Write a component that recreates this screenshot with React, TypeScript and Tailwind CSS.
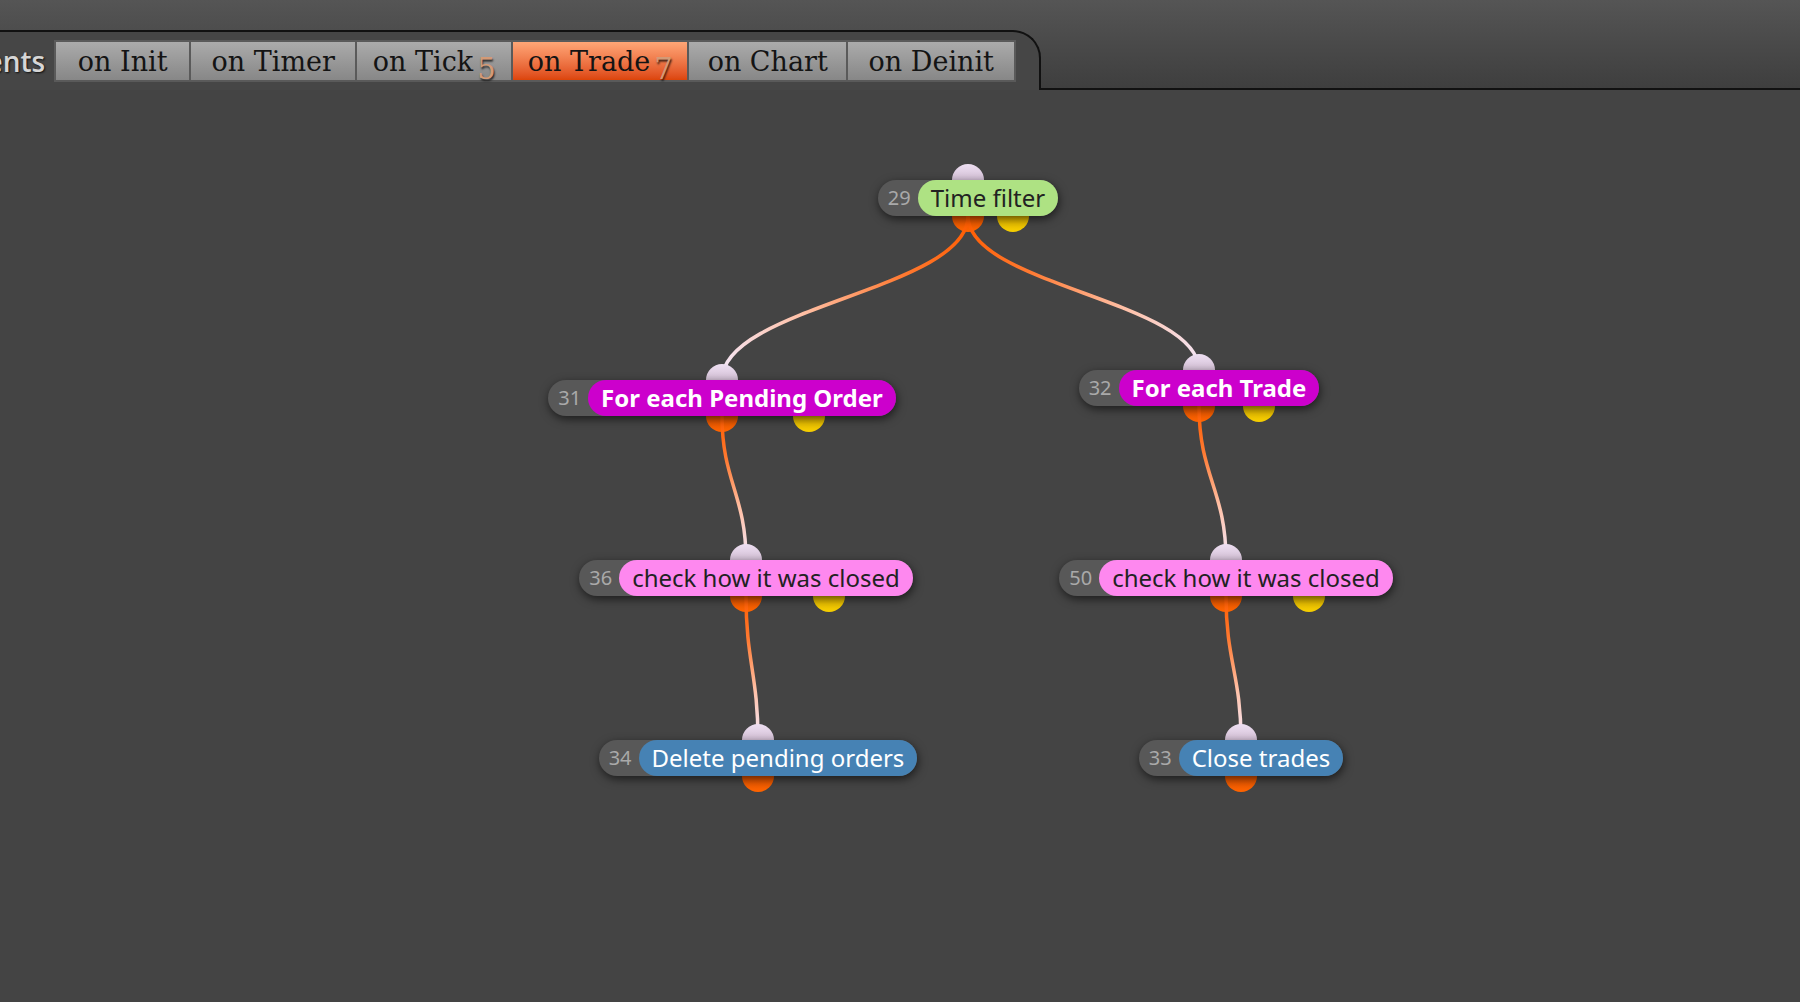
import React from 'react';

type Tab = { label: string; w: string; badge?: string; active?: boolean };

const tabs: Tab[] = [
  { label: 'on Init', w: 'w-[133px]' },
  { label: 'on Timer', w: 'w-[164px]' },
  { label: 'on Tick', w: 'w-[154px]', badge: '5' },
  { label: 'on Trade', w: 'w-[174px]', badge: '7', active: true },
  { label: 'on Chart', w: 'w-[157px]' },
  { label: 'on Deinit', w: 'w-[166px]' },
];

type Block = {
  id: number;
  label: string;
  cx: number;
  top: number;
  tone: string;
  loop?: boolean;
};

// block positions on the canvas (centre x, top y)
const blocks: Block[] = [
  { id: 29, label: 'Time filter', cx: 968, top: 90, tone: 'bg-[#aee283] text-[#222]', loop: true },
  { id: 31, label: 'For each Pending Order', cx: 722, top: 290, tone: 'bg-[#cc00cc] text-white font-bold', loop: true },
  { id: 32, label: 'For each Trade', cx: 1199, top: 280, tone: 'bg-[#cc00cc] text-white font-bold', loop: true },
  { id: 36, label: 'check how it was closed', cx: 746, top: 470, tone: 'bg-[#fe88ef] text-[#222]', loop: true },
  { id: 50, label: 'check how it was closed', cx: 1226, top: 470, tone: 'bg-[#fe88ef] text-[#222]', loop: true },
  { id: 34, label: 'Delete pending orders', cx: 758, top: 650, tone: 'bg-[#4682b4] text-white' },
  { id: 33, label: 'Close trades', cx: 1241, top: 650, tone: 'bg-[#4682b4] text-white' },
];

const links: [number, number][] = [
  [29, 31],
  [29, 32],
  [31, 36],
  [36, 34],
  [32, 50],
  [50, 33],
];

const H = 36;

function TabButton({ tab }: { tab: Tab }) {
  return (
    <div
      className={`${tab.w} flex h-[38px] items-center justify-center ${
        tab.active
          ? 'bg-gradient-to-b from-[#ffa676] to-[#dc4408]'
          : 'bg-gradient-to-b from-[#ababab] to-[#878787]'
      }`}
    >
      <span className="text-[27px] leading-none text-[#141414]">{tab.label}</span>
      {tab.badge && (
        <span className="relative top-[8px] ml-[4px] text-[29px] leading-none text-[#d39a76] [text-shadow:1px_2px_2px_rgba(0,0,0,0.75)]">
          {tab.badge}
        </span>
      )}
    </div>
  );
}

function Node({ b }: { b: Block }) {
  return (
    <div className="absolute flex w-0 justify-center" style={{ left: b.cx, top: b.top }}>
      <div className="relative shrink-0">
        <span className="absolute -top-4 left-1/2 z-[3] size-8 -translate-x-1/2 rounded-full bg-gradient-to-b from-[#eedff2] to-[#b9a2ba]" />
        <span className="absolute -bottom-4 left-1/2 z-[1] size-8 -translate-x-1/2 rounded-full bg-gradient-to-b from-[#c94400] to-[#ff6400]" />
        {b.loop && (
          <span className="absolute -bottom-4 left-3/4 z-[1] size-8 -translate-x-1/2 rounded-full bg-gradient-to-b from-[#c99a00] to-[#f7cf00]" />
        )}
        <div className="relative z-[4] flex h-9 items-center whitespace-nowrap rounded-full bg-[#585858] shadow-[1px_3px_10px_rgba(0,0,0,0.6)]">
          <span className="pl-[10px] pr-[7px] text-[20px] text-[#a9a9a9]">{b.id}</span>
          <span className={`flex h-9 items-center rounded-full px-[13px] text-[24px] ${b.tone}`}>{b.label}</span>
        </div>
      </div>
    </div>
  );
}

function Links() {
  const byId = new Map(blocks.map((b) => [b.id, b]));
  return (
    <svg className="pointer-events-none absolute inset-0 z-[2]" width="1800" height="912">
      <defs>
        {links.map(([a, c]) => {
          const p = byId.get(a)!;
          const q = byId.get(c)!;
          return (
            <linearGradient
              key={`g${a}-${c}`}
              id={`g${a}-${c}`}
              gradientUnits="userSpaceOnUse"
              x1={p.cx}
              y1={p.top + H}
              x2={q.cx}
              y2={q.top}
            >
              <stop offset="0" stopColor="#ff5c00" />
              <stop offset="0.3" stopColor="#ff7a32" />
              <stop offset="0.65" stopColor="#ffc0a6" />
              <stop offset="1" stopColor="#f4e8fa" />
            </linearGradient>
          );
        })}
      </defs>
      {links.map(([a, c]) => {
        const p = byId.get(a)!;
        const q = byId.get(c)!;
        const x1 = p.cx;
        const y1 = p.top + H;
        const x2 = q.cx;
        const y2 = q.top;
        const k = (y2 - y1) * 0.45;
        return (
          <path
            key={`${a}-${c}`}
            d={`M${x1} ${y1} C${x1} ${y1 + k}, ${x2} ${y2 - k}, ${x2} ${y2}`}
            fill="none"
            stroke={`url(#g${a}-${c})`}
            strokeWidth="3.5"
          />
        );
      })}
    </svg>
  );
}

export default function App() {
  return (
    <div className="flex h-[1002px] w-[1800px] flex-col overflow-hidden bg-[#444444] font-['Noto_Sans',sans-serif]">
      <header className="flex h-[90px] shrink-0 bg-gradient-to-b from-[#555555] to-[#3e3e3e]">
        <div className="flex w-[1041px] flex-col">
          <div className="h-[30px]" />
          <div className="flex flex-1 items-center overflow-hidden rounded-tr-[28px] border-t-2 border-r-2 border-[#111] bg-[#464646]">
            <span className="ml-[-44px] font-['Open_Sans',sans-serif] text-[28px] font-semibold text-[#d6d6d6] [text-shadow:1px_1px_2px_rgba(0,0,0,0.8)]">
              Events
            </span>
            <div className="ml-[9px] flex gap-[2px] bg-[#5a5a5a] p-[2px] font-['DejaVu_Serif',serif]">
              {tabs.map((t) => (
                <TabButton key={t.label} tab={t} />
              ))}
            </div>
          </div>
        </div>
        <div className="flex-1 border-b-2 border-[#111]" />
      </header>
      <main className="relative flex-1">
        <Links />
        {blocks.map((b) => (
          <Node key={b.id} b={b} />
        ))}
      </main>
    </div>
  );
}
